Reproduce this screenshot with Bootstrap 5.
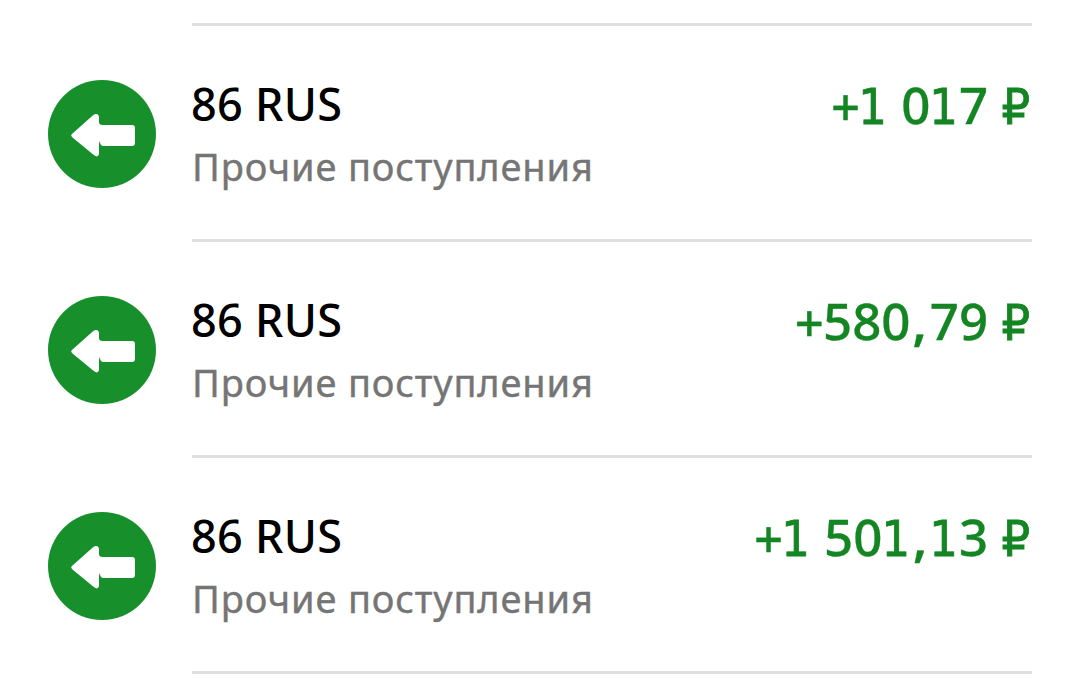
<!DOCTYPE html>
<html lang="ru">
<head>
  <meta charset="UTF-8">
  <meta name="viewport" content="width=device-width, initial-scale=1">
  <title>История операций</title>
  <link href="https://cdn.jsdelivr.net/npm/bootstrap@5.3.0/dist/css/bootstrap.min.css" rel="stylesheet">
  <style>
    body {
      font-family: "Noto Sans", "Open Sans", sans-serif;
    }

    .history {
      padding: 23px 48px 0;
    }

    .operation {
      height: 216px;
      gap: 36px;
    }

    .operation-icon {
      width: 108px;
      height: 108px;
      margin-top: 57px;
    }

    .operation-body {
      border-top: 3px solid #dfdfdf;
      padding-top: 48px;
    }

    .operation-title {
      font-size: 45px;
      line-height: 60px;
      font-weight: 500;
      letter-spacing: .3px;
      margin-left: -1px;
      color: #000;
    }

    .operation-type {
      font-size: 38px;
      line-height: 65px;
      letter-spacing: .85px;
      color: #757575;
      -webkit-text-stroke: .4px #757575;
    }

    .operation-sum {
      font-size: 51px;
      line-height: 60px;
      font-weight: 500;
      color: #138522;
      -webkit-text-stroke: .3px #138522;
    }

    /* the digit one with a foot, and the narrow ruble sign */
    .one,
    .ruble {
      font-family: "DejaVu Sans Condensed", "DejaVu Sans", sans-serif;
      font-stretch: condensed;
      font-size: 50px;
      line-height: 1;
      -webkit-text-stroke: .8px #138522;
    }

    .one {
      margin: 0 1px 0 -1px;
    }

    .ruble {
      margin-right: 2px;
    }

    .plus {
      line-height: 1;
      vertical-align: -2px;
      margin-right: -1px;
    }

    .comma {
      font-weight: 600;
      margin: 0 3px 0 2px;
    }

    .history-end {
      height: 3px;
      margin-left: 144px;
      background: #dfdfdf;
    }
  </style>
</head>
<body class="bg-white overflow-hidden">

  <!-- Arrow icon -->
  <svg class="d-none">
    <symbol id="incoming" viewBox="0 0 108 108">
      <circle cx="54" cy="54" r="54" fill="#17902c"/>
      <path fill="#fff" d="M24.2 53.8 45.6 34.8Q47.500 33.300 49.500 34.300Q51 35.300 51 37V43Q52 45 54 45H84Q87 45 87 48V63Q87 66 84 66H55Q53 66 51 61V74Q50.500 76.500 48.500 76.400Q47 76 45.500 74.700L24.200 57.200Q22.300 55.500 24.200 53.800Z"/>
    </symbol>
  </svg>

  <!-- Operations -->
  <main class="history">
    <div class="operation d-flex align-items-start">
      <svg class="operation-icon flex-shrink-0"><use href="#incoming"/></svg>
      <div class="operation-body d-flex justify-content-between align-items-start flex-grow-1">
        <div class="text-nowrap">
          <div class="operation-title">86 RUS</div>
          <div class="operation-type">Прочие поступления</div>
        </div>
        <div class="operation-sum text-nowrap"><span class="plus">+</span><span class="one">1</span> 0<span class="one">1</span>7 <span class="ruble">₽</span></div>
      </div>
    </div>

    <div class="operation d-flex align-items-start">
      <svg class="operation-icon flex-shrink-0"><use href="#incoming"/></svg>
      <div class="operation-body d-flex justify-content-between align-items-start flex-grow-1">
        <div class="text-nowrap">
          <div class="operation-title">86 RUS</div>
          <div class="operation-type">Прочие поступления</div>
        </div>
        <div class="operation-sum text-nowrap"><span class="plus">+</span>580<span class="comma">,</span>79 <span class="ruble">₽</span></div>
      </div>
    </div>

    <div class="operation d-flex align-items-start">
      <svg class="operation-icon flex-shrink-0"><use href="#incoming"/></svg>
      <div class="operation-body d-flex justify-content-between align-items-start flex-grow-1">
        <div class="text-nowrap">
          <div class="operation-title">86 RUS</div>
          <div class="operation-type">Прочие поступления</div>
        </div>
        <div class="operation-sum text-nowrap"><span class="plus">+</span><span class="one">1</span> 50<span class="one">1</span><span class="comma">,</span><span class="one">1</span>3 <span class="ruble">₽</span></div>
      </div>
    </div>
    <div class="history-end"></div>
  </main>

  <script src="https://cdn.jsdelivr.net/npm/bootstrap@5.3.0/dist/js/bootstrap.bundle.min.js"></script>
</body>
</html>
